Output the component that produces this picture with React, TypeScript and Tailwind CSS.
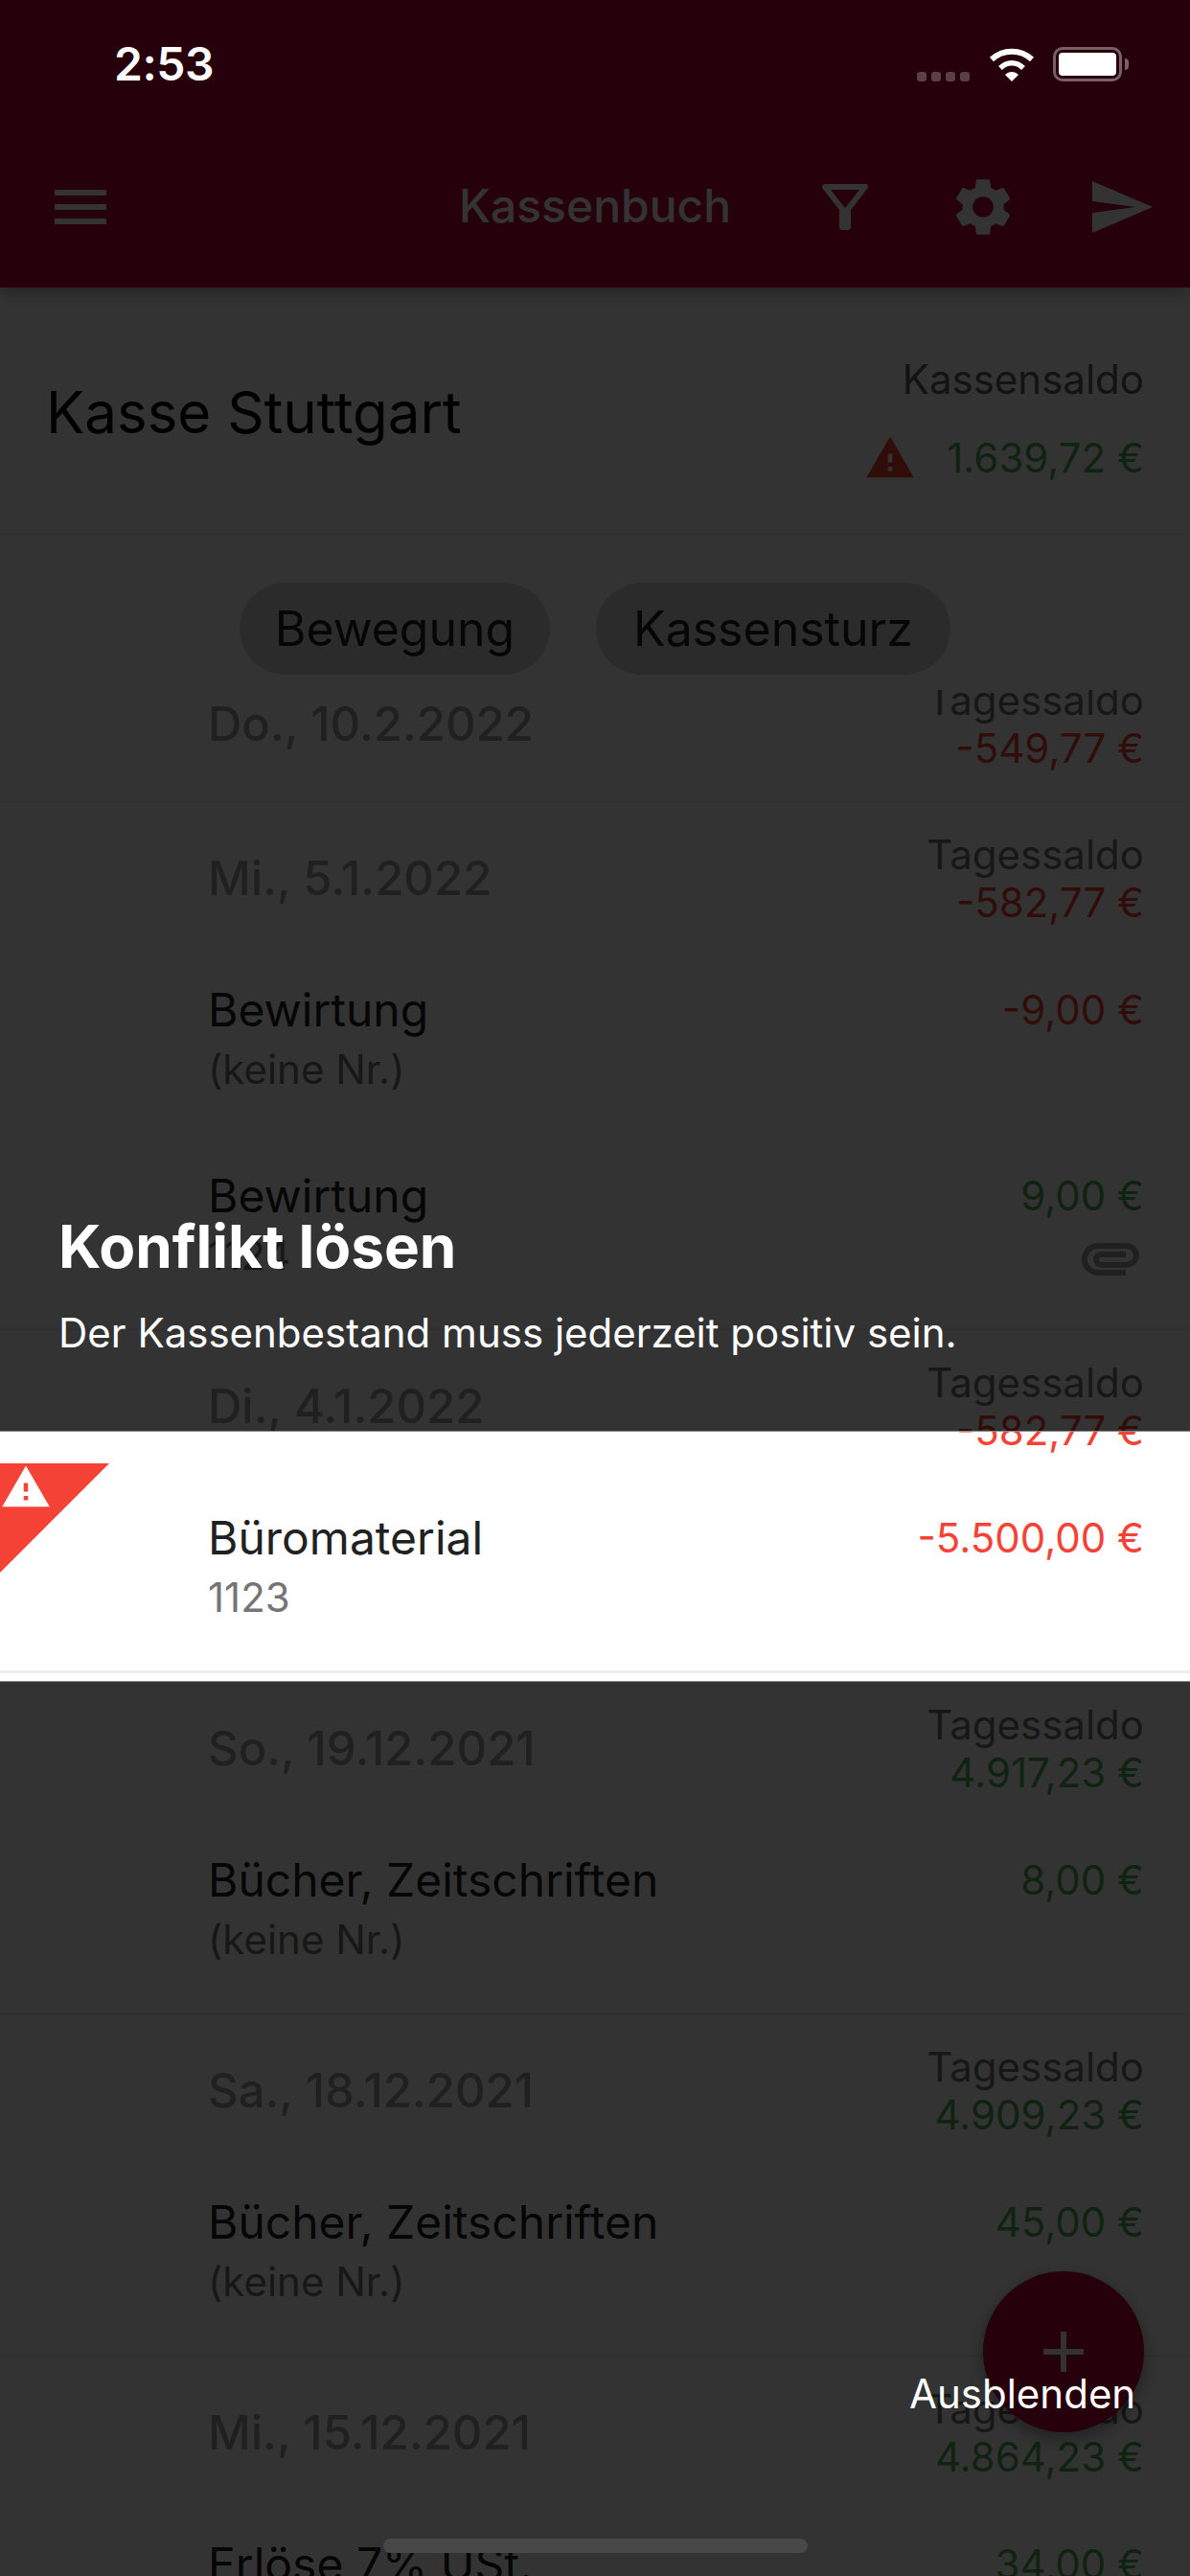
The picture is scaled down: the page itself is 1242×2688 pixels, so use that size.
const GREEN = "text-[#4caf50]";
const RED = "text-[#f44336]";

type Item = { title: string; sub: string; amount: string; red?: boolean; clip?: boolean; tight?: boolean; flag?: boolean };
type Day = { date: string; saldo: string; red?: boolean; first?: boolean; items: Item[] };

const DAYS: Day[] = [
  { date: "Do., 10.2.2022", saldo: "-549,77 €", red: true, first: true, items: [] },
  {
    date: "Mi., 5.1.2022",
    saldo: "-582,77 €",
    red: true,
    items: [
      { title: "Bewirtung", sub: "(keine Nr.)", amount: "-9,00 €", red: true, tight: true },
      { title: "Bewirtung", sub: "1124", amount: "9,00 €", clip: true },
    ],
  },
  {
    date: "Di., 4.1.2022",
    saldo: "-582,77 €",
    red: true,
    items: [{ title: "Büromaterial", sub: "1123", amount: "-5.500,00 €", red: true, flag: true }],
  },
  {
    date: "So., 19.12.2021",
    saldo: "4.917,23 €",
    items: [{ title: "Bücher, Zeitschriften", sub: "(keine Nr.)", amount: "8,00 €" }],
  },
  {
    date: "Sa., 18.12.2021",
    saldo: "4.909,23 €",
    items: [{ title: "Bücher, Zeitschriften", sub: "(keine Nr.)", amount: "45,00 €" }],
  },
  {
    date: "Mi., 15.12.2021",
    saldo: "4.864,23 €",
    items: [{ title: "Erlöse 7% USt.", sub: "(keine Nr.)", amount: "34,00 €" }],
  },
];

function Icon({ d, className }: { d: string; className: string }) {
  return (
    <svg aria-hidden viewBox="0 0 24 24" className={className} fill="currentColor">
      <path d={d} />
    </svg>
  );
}

const WARNING = "M1 21h22L12 2 1 21zm12-3h-2v-2h2v2zm0-4h-2v-4h2v4z";
const GEAR =
  "M19.14 12.94c.04-.3.06-.61.06-.94 0-.32-.02-.64-.07-.94l2.03-1.58c.18-.14.23-.41.12-.61l-1.92-3.32c-.12-.22-.37-.29-.59-.22l-2.39.96c-.5-.38-1.03-.7-1.62-.94l-.36-2.54c-.04-.24-.24-.41-.48-.41h-3.84c-.24 0-.43.17-.47.41l-.36 2.54c-.59.24-1.13.57-1.62.94l-2.39-.96c-.22-.08-.47 0-.59.22L2.74 8.87c-.12.21-.08.47.12.61l2.03 1.58c-.05.3-.09.63-.09.94s.02.64.07.94l-2.03 1.58c-.18.14-.23.41-.12.61l1.92 3.32c.12.22.37.29.59.22l2.39-.96c.5.38 1.03.7 1.62.94l.36 2.54c.05.24.24.41.48.41h3.84c.24 0 .44-.17.47-.41l.36-2.54c.59-.24 1.13-.56 1.62-.94l2.39.96c.22.08.47 0 .59-.22l1.92-3.32c.12-.22.07-.47-.12-.61l-2.01-1.58zM12 15.6c-1.98 0-3.6-1.62-3.6-3.6s1.62-3.6 3.6-3.6 3.6 1.62 3.6 3.6-1.62 3.6-3.6 3.6z";

function FilterIcon() {
  return (
    <svg aria-hidden viewBox="0 0 48 48" className="h-12 w-12" fill="none" stroke="currentColor">
      <path d="M3 3H45L24 30Z" strokeWidth="6" strokeLinejoin="round" />
      <rect x="18" y="26" width="12" height="22" rx="3" fill="currentColor" stroke="none" />
    </svg>
  );
}

function PaperclipIcon() {
  return (
    <svg aria-hidden viewBox="0 0 60 34" className="h-[34px] w-[60px]" fill="none" stroke="currentColor" strokeWidth="6">
      <path d="M46 31H18C9 31 3 25 3 17C3 9 9 3 18 3H45C52 3 57 7 57 13C57 19 52 23 45 23H21C17 23 15 20 15 17C15 14 17 12 21 12H46" />
    </svg>
  );
}

function StatusBar() {
  return (
    <div className="absolute inset-x-0 top-0 z-20 flex h-[132px] items-start pl-[119px] pr-[64px] pt-[38px] text-white">
      <span className="text-[48px] leading-[58px] font-semibold tracking-[-0.5px]">2:53</span>
      <div className="ml-auto mt-[11px] flex items-end">
        <div className="flex items-center gap-[5px]">
          <span className="h-[10px] w-[10px] rounded-[3px] bg-[#5a3f46]" />
          <span className="h-[10px] w-[10px] rounded-[3px] bg-[#5a3f46]" />
          <span className="h-[10px] w-[10px] rounded-[3px] bg-[#5a3f46]" />
          <span className="h-[10px] w-[10px] rounded-[3px] bg-[#5a3f46]" />
        </div>
        <svg aria-hidden viewBox="0 0 48 36" className="ml-[20px] h-9 w-12" fill="none" stroke="currentColor">
          <path d="M3 13C15 2 33 2 45 13" strokeWidth="6" />
          <path d="M12 22C19 15 29 15 36 22" strokeWidth="5.500" />
          <path d="M17 29C21 25 27 25 31 29L24 36Z" fill="currentColor" stroke="none" />
        </svg>
        <div className="ml-[19px] flex items-center">
          <div className="h-9 w-[72px] rounded-[10px] border-[3px] border-[#7a5f66] p-[3px]">
            <div className="h-full w-full rounded-[4px] bg-white" />
          </div>
          <span className="ml-[3px] h-3 w-[4px] rounded-r-full bg-[#7a5f66]" />
        </div>
      </div>
    </div>
  );
}

function AppBar() {
  return (
    <header className="relative z-[1] h-[300px] shrink-0 bg-[#be0032] pt-[132px] text-white shadow-[0_6px_16px_rgba(0,0,0,0.3)]">
      <div className="flex h-[168px] items-center pl-[48px] pr-[36px]">
        <Icon d="M3 18h18v-2H3v2zm0-5h18v-2H3v2zm0-7v2h18V6H3z" className="h-[72px] w-[72px]" />
        <span className="mb-[2px] ml-[359px] text-[48px] font-medium leading-none">Kassenbuch</span>
        <div className="ml-auto flex items-center gap-[72px]">
          <div className="flex h-[72px] w-[72px] items-center justify-center">
            <FilterIcon />
          </div>
          <Icon d={GEAR} className="h-[72px] w-[72px]" />
          <Icon d="M2.01 21L23 12 2.01 3 2 10l15 2-15 2z" className="h-[72px] w-[72px]" />
        </div>
      </div>
    </header>
  );
}

function Summary() {
  return (
    <section className="flex h-[258px] shrink-0 items-center justify-between border-b-[2px] border-[#eeeeee] pl-[48px] pr-[48px]">
      <h1 className="mt-[3px] text-[60px] leading-none text-black">Kasse Stuttgart</h1>
      <div className="mt-[20px] flex flex-col items-end">
        <span className="text-[42px] leading-[50px] text-[#616161]">Kassensaldo</span>
        <div className="mt-[30px] flex items-center">
          <Icon d={WARNING} className={"mr-[32px] h-[54px] w-[54px] " + RED} />
          <span className={"text-[42px] leading-[50px] " + GREEN}>1.639,72 €</span>
        </div>
      </div>
    </section>
  );
}

function Tabs() {
  return (
    <div className="flex h-[162px] shrink-0 items-start justify-center gap-[48px] pt-[50px]">
      <span className="flex h-[96px] w-[324px] items-center justify-center rounded-full bg-[#d6d6d6] text-[50px] text-[#212121]">
        Bewegung
      </span>
      <span className="flex h-[96px] w-[370px] items-center justify-center rounded-full bg-[#d6d6d6] text-[50px] text-[#212121]">
        Kassensturz
      </span>
    </div>
  );
}

function ItemRow({ item }: { item: Item }) {
  return (
    <div
      className={
        "relative flex justify-between pl-[217px] pr-[48px] pt-[50px] " +
        (item.tight ? "h-[194px]" : "h-[216px] border-b-[3px] border-[#eeeeee]")
      }
    >
      {item.flag && (
        <>
          <svg aria-hidden viewBox="0 0 114 114" className={"absolute left-0 top-[-3px] h-[114px] w-[114px] " + RED} fill="currentColor">
            <path d="M0 0H114L0 114Z" />
          </svg>
          <Icon d={WARNING} className="absolute left-0 top-[-5px] h-[54px] w-[54px] text-white" />
        </>
      )}
      <div>
        <p className="text-[48px] leading-[50px] text-[#212121]">{item.title}</p>
        <p className="mt-[12px] text-[42px] leading-[50px] text-[#757575]">{item.sub}</p>
      </div>
      <div className="flex flex-col items-end">
        <p className={"text-[42px] leading-[50px] " + (item.red ? RED : GREEN)}>{item.amount}</p>
        {item.clip && (
          <span className="mr-[5px] mt-[24px] text-[#9e9e9e]">
            <PaperclipIcon />
          </span>
        )}
      </div>
    </div>
  );
}

function DayRow({ day }: { day: Day }) {
  return (
    <>
      <div
        className={
          "flex justify-between pl-[217px] pr-[48px] " +
          (day.first ? "-mt-[45px] h-[163px] border-b-[2px] border-[#eeeeee] pt-[31px]" : "h-[141px] pt-[29px]")
        }
      >
        <p className="mt-[25px] text-[49px] font-medium leading-[50px] text-[#9e9e9e]">{day.date}</p>
        <div className="flex flex-col items-end">
          <span className="text-[42px] leading-[50px] text-[#757575]">Tagessaldo</span>
          <span className={"text-[42px] leading-[50px] " + (day.red ? RED : GREEN)}>{day.saldo}</span>
        </div>
      </div>
      {day.items.map((item) => (
        <ItemRow key={item.title + item.amount} item={item} />
      ))}
    </>
  );
}

function Coachmark() {
  return (
    <div className="absolute inset-0 z-10 flex flex-col">
      <div className="flex h-[1494px] flex-col items-start justify-end border-b border-[#8a8a8a] bg-black/80 pb-[77px] pl-[61px] text-white">
        <h2 className="text-[62px] font-bold leading-[70px]">Konflikt lösen</h2>
        <p className="mt-[30px] text-[42px] leading-[50px]">Der Kassenbestand muss jederzeit positiv sein.</p>
      </div>
      <div className="h-[260px]" />
      <div className="relative flex-1 border-t border-[#8a8a8a] bg-black/80">
        <span className="absolute left-[949px] top-[718px] text-[42px] leading-[50px] text-white">Ausblenden</span>
      </div>
    </div>
  );
}

export default function App() {
  return (
    <div className="relative flex h-[2688px] w-[1242px] flex-col overflow-hidden bg-white font-['Inter',sans-serif]">
      <StatusBar />
      <AppBar />
      <Summary />
      <Tabs />
      <div className="min-h-0 flex-1 overflow-hidden">
        {DAYS.map((day) => (
          <DayRow key={day.date} day={day} />
        ))}
      </div>
      <button
        type="button"
        className="absolute left-[1026px] top-[2370px] flex h-[168px] w-[168px] items-center justify-center rounded-full bg-[#be0032] text-white shadow-[0_6px_18px_rgba(0,0,0,0.4)]"
      >
        <Icon d="M19 13h-6v6h-2v-6H5v-2h6V5h2v6h6v2z" className="h-[72px] w-[72px]" />
      </button>
      <Coachmark />
      <div className="absolute left-[400px] top-[2649px] z-20 h-[15px] w-[443px] rounded-full bg-[#484848]" />
    </div>
  );
}
